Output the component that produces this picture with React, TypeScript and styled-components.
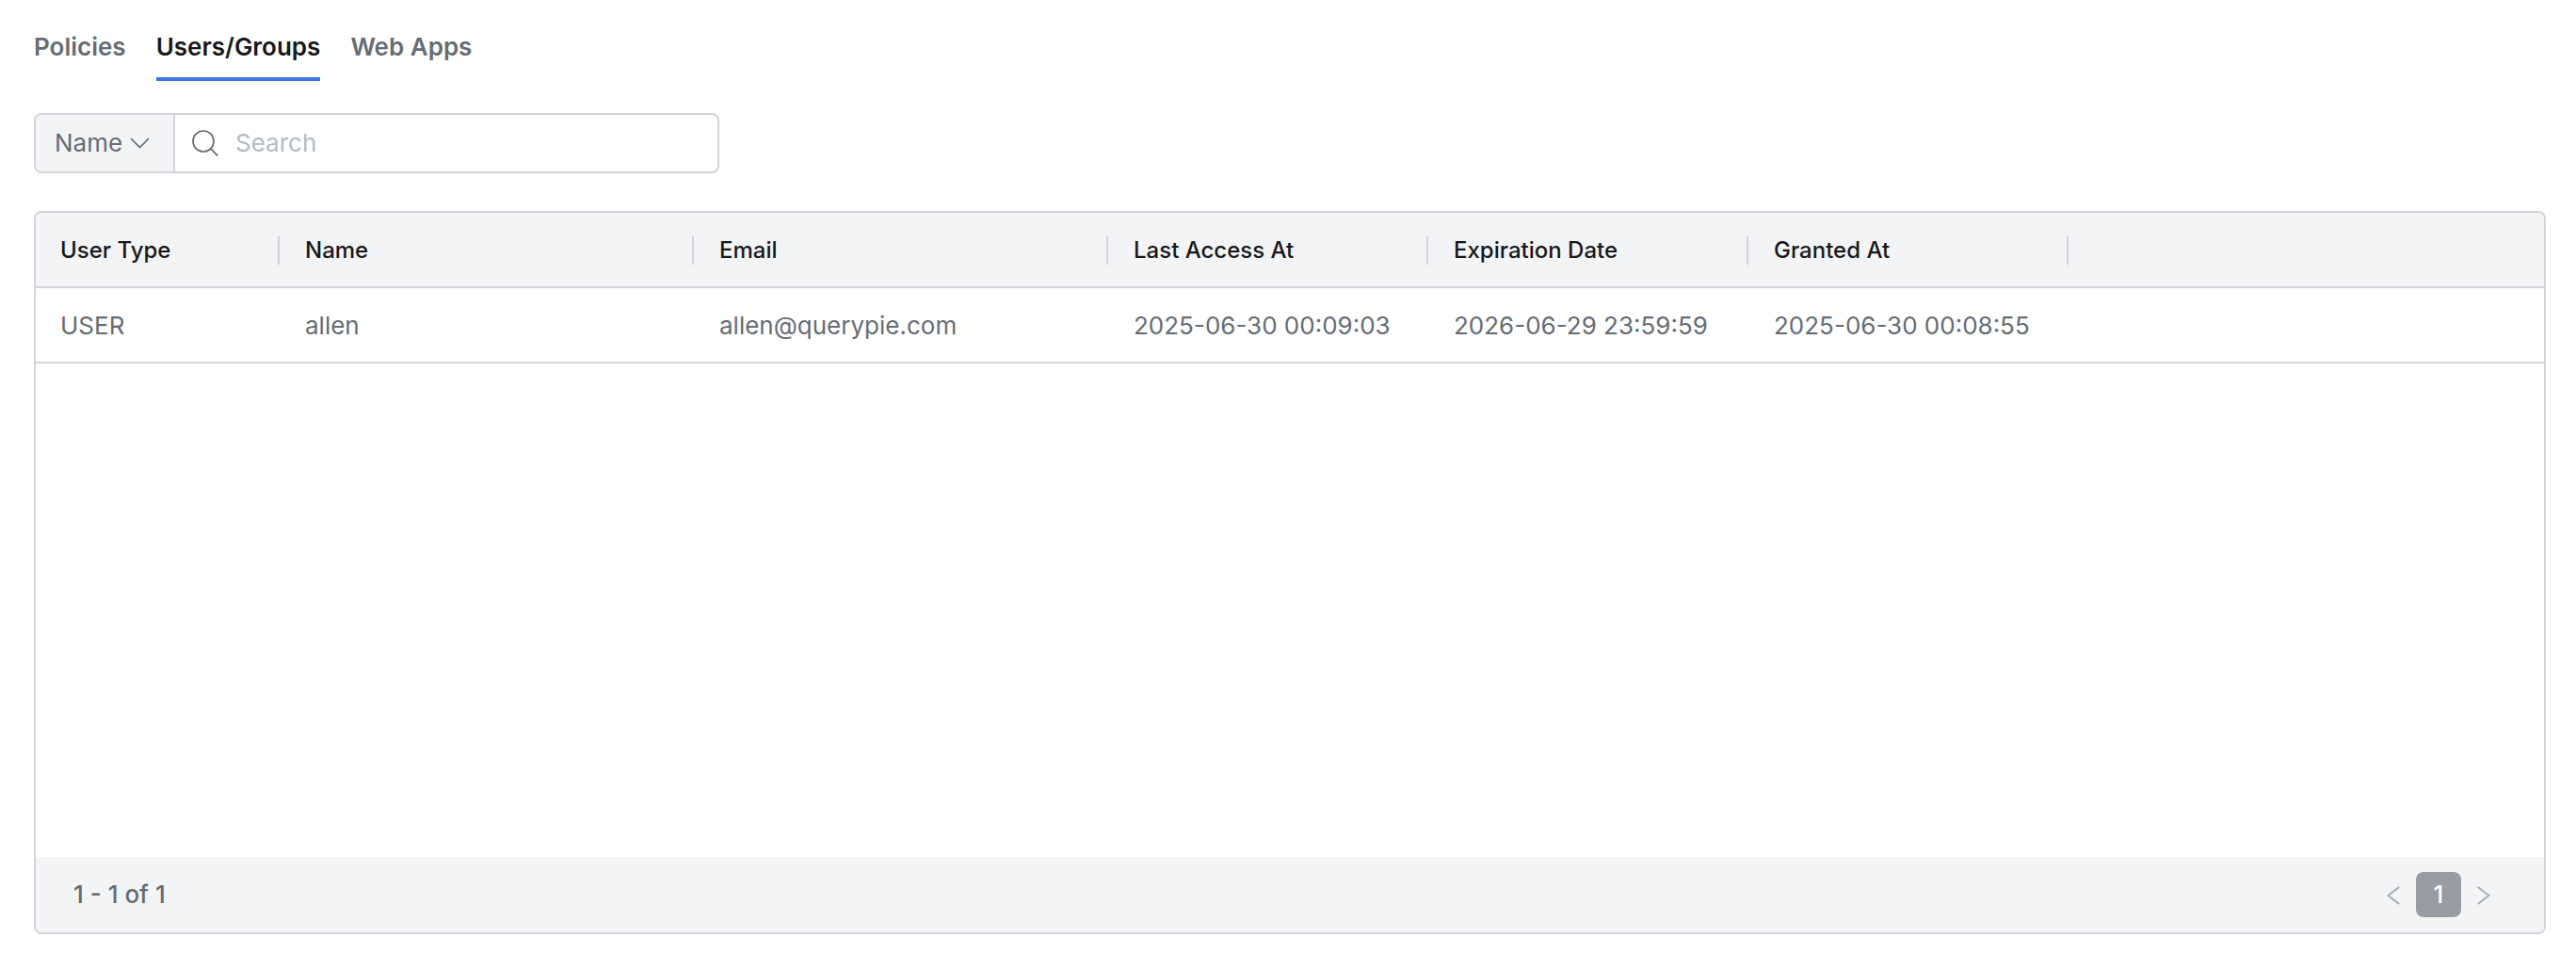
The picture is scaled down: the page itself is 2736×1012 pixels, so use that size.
import React, { useState } from 'react';
import styled, { createGlobalStyle } from 'styled-components';

const color = {
  text: '#666c73',
  strong: '#17181a',
  muted: '#b5bbc1',
  border: '#d3d4d9',
  rule: '#d1d5d9',
  panel: '#f3f4f6',
  accent: '#3e74dd',
  page: '#989ca3',
  arrow: '#a9acb2',
};

const GlobalStyle = createGlobalStyle`
  *, *::before, *::after { box-sizing: border-box; }
  body {
    margin: 0;
    background: #fff;
    color: ${color.text};
    font-family: Inter, "Liberation Sans", sans-serif;
    font-size: 26px;
    line-height: 32px;
  }
  button, input, select { font: inherit; color: inherit; }
`;

const Page = styled.main`
  display: flex;
  flex-direction: column;
  min-height: 100vh;
  padding: 18px 32px 20px 36px;
`;

const Tabs = styled.nav`
  display: flex;
  gap: 32px;
  margin-bottom: 34px;
`;

const Tab = styled.button<{ $active: boolean }>`
  padding: 16px 0;
  border: 0;
  border-bottom: 4px solid ${(p) => (p.$active ? color.accent : 'transparent')};
  background: none;
  color: ${(p) => (p.$active ? color.strong : color.text)};
  font-weight: 600;
  cursor: pointer;
`;

const SearchBar = styled.form`
  display: flex;
  width: 728px;
  max-width: 100%;
  height: 64px;
  margin-bottom: 40px;
  border: 2px solid ${color.border};
  border-radius: 8px;
  overflow: hidden;
`;

const FieldPicker = styled.label`
  display: grid;
  align-items: center;
  flex: none;
  width: 148px;
  border-right: 2px solid ${color.border};
  background: ${color.panel};

  > * { grid-area: 1 / 1; }
  > svg {
    justify-self: end;
    margin-right: 25px;
    pointer-events: none;
  }
`;

const FieldSelect = styled.select`
  width: 100%;
  height: 100%;
  padding: 0 48px 0 20px;
  border: 0;
  background: none;
  appearance: none;
  outline: none;
`;

const QueryField = styled.label`
  display: flex;
  flex: 1;
  align-items: center;
  gap: 18px;
  padding-left: 18px;
`;

const QueryInput = styled.input`
  flex: 1;
  min-width: 0;
  height: 100%;
  padding: 0 0 2px;
  border: 0;
  background: none;
  outline: none;
  &::placeholder { color: ${color.muted}; opacity: 1; }
`;

const Panel = styled.section`
  display: flex;
  flex: 1;
  flex-direction: column;
  border: 2px solid ${color.border};
  border-radius: 8px;
  overflow: hidden;
`;

const TableArea = styled.div`
  flex: 1;
  overflow-x: auto;
`;

const Table = styled.table`
  width: 100%;
  table-layout: fixed;
  border-collapse: separate;
  border-spacing: 0;
`;

const Column = styled.col<{ $width?: number }>`
  width: ${(p) => (p.$width ? `${p.$width}px` : 'auto')};
`;

const HeadCell = styled.th`
  padding: 25px 0 23px;
  border-bottom: 2px solid ${color.border};
  background: ${color.panel};
  color: ${color.strong};
  font-size: 24px;
  font-weight: 500;
  line-height: 30px;
  text-align: left;
`;

const HeadLabel = styled.div`
  height: 30px;
  margin-right: 1px;
  padding-left: 26px;
  border-right: 2px solid ${color.border};
`;

const Cell = styled.td`
  height: 80px;
  padding: 2px 0 0 26px;
  border-bottom: 2px solid ${color.rule};
  white-space: nowrap;
`;

const Footer = styled.footer`
  display: flex;
  align-items: center;
  justify-content: space-between;
  height: 80px;
  padding: 0 40px;
  background: ${color.panel};
  font-weight: 500;
`;

const Pager = styled.nav`
  display: flex;
  align-items: center;
`;

const PageButton = styled.button<{ $current?: boolean }>`
  display: flex;
  align-items: center;
  justify-content: center;
  width: 48px;
  height: 48px;
  padding: 0;
  border: 0;
  border-radius: 8px;
  background: ${(p) => (p.$current ? color.page : 'none')};
  color: ${(p) => (p.$current ? '#fff' : color.arrow)};
`;

const columns = [
  { label: 'User Type', width: 260 },
  { label: 'Name', width: 440 },
  { label: 'Email', width: 440 },
  { label: 'Last Access At', width: 340 },
  { label: 'Expiration Date', width: 340 },
  { label: 'Granted At', width: 340 },
];

const rows = [
  ['USER', 'allen', 'allen@querypie.com', '2025-06-30 00:09:03', '2026-06-29 23:59:59', '2025-06-30 00:08:55'],
];

const tabs = ['Policies', 'Users/Groups', 'Web Apps'];

const ChevronDown = () => (
  <svg width="21" height="14" viewBox="0 0 21 14" fill="none" stroke={color.text} strokeWidth="1.7" aria-hidden="true">
    <path d="M1 2 10.5 11.5 20 2" />
  </svg>
);

const SearchIcon = () => (
  <svg width="28" height="28" viewBox="0 0 28 28" fill="none" stroke={color.text} strokeWidth="1.7" aria-hidden="true">
    <circle cx="12" cy="12" r="11" />
    <path d="M19.8 19.8 27.3 27.3" />
  </svg>
);

const Arrow = ({ next }: { next?: boolean }) => (
  <svg width="14" height="22" viewBox="0 0 14 22" fill="none" stroke="currentColor" strokeWidth="2" aria-hidden="true">
    <path d={next ? 'M.8 3 12.5 12 .8 21' : 'M13.2 3 1.5 12 13.2 21'} />
  </svg>
);

export default function App() {
  const [active, setActive] = useState('Users/Groups');
  const [query, setQuery] = useState('');

  return (
    <Page>
      <GlobalStyle />
      <Tabs>
        {tabs.map((tab) => (
          <Tab key={tab} type="button" $active={tab === active} onClick={() => setActive(tab)}>
            {tab}
          </Tab>
        ))}
      </Tabs>

      <SearchBar onSubmit={(e) => e.preventDefault()}>
        <FieldPicker>
          <FieldSelect aria-label="Search field">
            <option>Name</option>
          </FieldSelect>
          <ChevronDown />
        </FieldPicker>
        <QueryField>
          <SearchIcon />
          <QueryInput
            type="text"
            aria-label="Search"
            placeholder="Search"
            value={query}
            onChange={(e) => setQuery(e.target.value)}
          />
        </QueryField>
      </SearchBar>

      <Panel>
        <TableArea>
          <Table>
            <colgroup>
              {columns.map((c) => (
                <Column key={c.label} $width={c.width} />
              ))}
              <Column />
            </colgroup>
            <thead>
              <tr>
                {columns.map((c) => (
                  <HeadCell key={c.label} scope="col">
                    <HeadLabel>{c.label}</HeadLabel>
                  </HeadCell>
                ))}
                <HeadCell as="td" />
              </tr>
            </thead>
            <tbody>
              {rows.map((row) => (
                <tr key={row[2]}>
                  {row.map((value, i) => (
                    <Cell key={columns[i].label}>{value}</Cell>
                  ))}
                  <Cell />
                </tr>
              ))}
            </tbody>
          </Table>
        </TableArea>
        <Footer>
          <span>1 - 1 of 1</span>
          <Pager aria-label="Pagination">
            <PageButton type="button" aria-label="Previous page">
              <Arrow />
            </PageButton>
            <PageButton type="button" $current aria-current="page">
              1
            </PageButton>
            <PageButton type="button" aria-label="Next page">
              <Arrow next />
            </PageButton>
          </Pager>
        </Footer>
      </Panel>
    </Page>
  );
}
